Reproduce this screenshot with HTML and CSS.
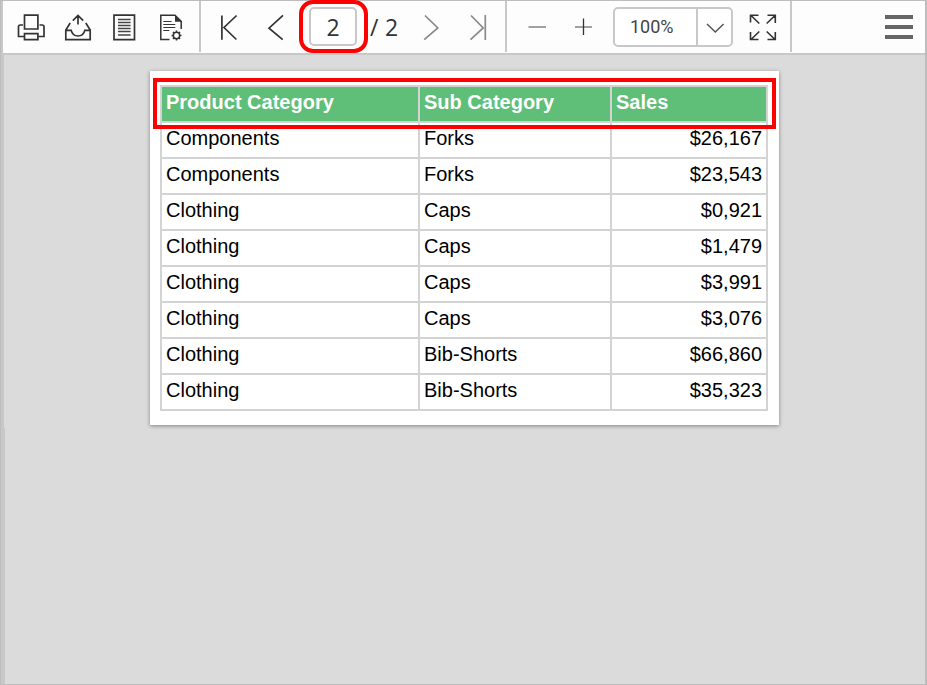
FILE: index.html
```html
<!DOCTYPE html>
<html lang="en">
<head>
<meta charset="utf-8">
<title>Report Viewer</title>
<link rel="stylesheet" href="styles.css">
</head>
<body>
<div class="viewer">
  <header class="toolbar">
    <div class="group file">
      <svg class="icon" viewBox="8 1 46 52"><path d="M24.500 25V15.200h13.400V25M24 36.500h-5.500V26.700q0-1.700 1.700-1.700h2.800M38.800 36.500h5.200V26.700q0-1.700-1.700-1.700h-2.800M24.500 25v4h13.400v-4M24.500 33.600h13.400v6H24.500z"/></svg>
      <svg class="icon" viewBox="54 1 46 52"><path d="M78 24.500V15.800M72.800 20.600l5.200-5.200 5.200 5.200M70.200 23l-4.400 7v9.600h24.400V30l-4.400-7M65.800 30.400h5.400q1.400 5.600 6.800 5.600t6.800-5.600h5.400"/></svg>
      <svg class="icon list" viewBox="100 1 46 52"><path d="M114 15.200h20.500v24.400H114z"/><path class="lines" d="M118 19.500h12.600M118 22.500h12.600M118 25.500h12.600M118 28.500h12.600M118 31.500h12.600M118 35h12.600"/></svg>
      <svg class="icon doc" viewBox="146 1 46 52"><path d="M169.500 39.600H160.800V15.200H175l6.200 6.200V29"/><path class="lines" d="M163.300 21.500h8.300M163.300 24.500h12M163.300 27.500h12M163.300 30.500h6"/><path class="solid" d="M175 15l6.700 6.700H175z"/><circle cx="176.500" cy="35.500" r="3.200"/><path d="M176.500 30.600v1.700M176.500 38.700v1.700M171.600 35.500h1.700M179.700 35.500h1.700M173 32l1.200 1.200M178.800 37.800l1.200 1.200M180 32l-1.200 1.200M174.200 37.800l-1.200 1.200"/></svg>
    </div>
    <div class="group paging">
      <svg class="icon" viewBox="201 1 46 52"><path d="M221.900 15.500V39.800M236.600 15.500L224 27.500l12.400 12"/></svg>
      <svg class="icon prev" viewBox="247 1 52 52"><path d="M283 15.300L269 28.200l13.700 11.500"/></svg>
      <div class="current"><span class="page-input">2</span></div>
      <span class="total">/ 2</span>
      <svg class="icon dim" viewBox="408 1 46 52"><path d="M425 15.500l12.800 12.400L424.200 39.700"/></svg>
      <svg class="icon dim" viewBox="454 1 46 52"><path d="M471 15.500l12.200 12.400L470.500 39.700M485.300 15v25"/></svg>
    </div>
    <div class="group zooming">
      <svg class="icon thin" viewBox="514 1 46 52"><path class="gray" d="M528.500 27h17.500"/></svg>
      <svg class="icon thin" viewBox="560 1 46 52"><path class="gray" d="M575 27h17"/><path d="M583.500 18.500v16.500"/></svg>
      <div class="zoom"><span class="zoom-value">100%</span><svg class="caret" viewBox="698 9 33 36"><path d="M707 24l8.300 8 8.300-8"/></svg></div>
      <svg class="icon full" viewBox="740 1 46 52"><path d="M750.500 22.500v-7.200h8M751 15.500l8.300 8M767.500 15.200h7.800v7.800M775 15.500l-8.300 8M750.500 32v7.500h8M751 39.500l8.300-8M767.500 39.500h7.800v-7.500M775 39.500l-8.300-8"/></svg>
    </div>
    <div class="menu"><i></i><i></i><i></i></div>
  </header>
  <main class="canvas">
    <section class="sheet">
      <table>
        <thead><tr><th class="category">Product Category</th><th class="sub">Sub Category</th><th class="sales">Sales</th></tr></thead>
        <tbody>
          <tr><td>Components</td><td>Forks</td><td>$26,167</td></tr>
          <tr><td>Components</td><td>Forks</td><td>$23,543</td></tr>
          <tr><td>Clothing</td><td>Caps</td><td>$0,921</td></tr>
          <tr><td>Clothing</td><td>Caps</td><td>$1,479</td></tr>
          <tr><td>Clothing</td><td>Caps</td><td>$3,991</td></tr>
          <tr><td>Clothing</td><td>Caps</td><td>$3,076</td></tr>
          <tr><td>Clothing</td><td>Bib-Shorts</td><td>$66,860</td></tr>
          <tr><td>Clothing</td><td>Bib-Shorts</td><td>$35,323</td></tr>
        </tbody>
      </table>
      <div class="highlight"></div>
    </section>
  </main>
</div>
</body>
</html>
```
FILE: styles.css
```css
* { box-sizing: border-box; }
body { margin: 0; overflow: hidden; }
.viewer {
  display: flex;
  flex-direction: column;
  height: 685px;
  border: 1px solid #bdbdbd;
  border-right-width: 2px;
  background: #c8c8c8;
  padding-left: 2px;
}
.toolbar {
  display: flex;
  flex: none;
  height: 54px;
  background: #fdfdfd;
  border-bottom: 2px solid #c8c8c8;
}
.group {
  display: flex;
  height: 51px;
  border-right: 2px solid #c8c8c8;
}
.file { width: 198px; padding-left: 5px; }
.paging { width: 306px; }
.zooming { width: 285px; padding-left: 7px; }
.icon {
  flex: none;
  width: 46px;
  height: 52px;
  fill: none;
  stroke: #333;
  stroke-width: 1.7;
}
.icon .solid { fill: #333; stroke: none; }
.list .lines { stroke-width: 1.5; stroke: #444; }
.doc .lines { stroke-width: 1.2; }
.doc { stroke-width: 1.5; }
.prev { width: 52px; }
.dim { stroke: #8a8a8a; }
.thin { stroke-width: 1.3; }
.thin .gray { stroke: #8a8a8a; stroke-width: 1.6; }
.full { margin-left: 7px; stroke-width: 1.6; }
.current {
  flex: none;
  display: flex;
  align-items: center;
  width: 69px;
  height: 53px;
  margin-top: -1px;
  border: 4px solid #f00;
  border-radius: 14px;
  padding-left: 6px;
}
.page-input {
  width: 48px;
  height: 39px;
  border: 2px solid #c8c8c8;
  border-radius: 5px;
  background: #fff;
  text-align: center;
}
.page-input, .total {
  font: 23px/37px "Open Sans", sans-serif;
  color: #333;
}
.total {
  flex: none;
  width: 40px;
  padding: 8px 0 0 2px;
  white-space: nowrap;
  letter-spacing: .3px;
}
.zoom {
  display: flex;
  width: 120px;
  height: 40px;
  margin: 6px 0 0 7px;
  border: 2px solid #c8c8c8;
  border-radius: 5px;
  background: #fff;
}
.zoom-value {
  width: 83px;
  border-right: 2px solid #c8c8c8;
  padding-left: 15px;
  font: 18px/35px Roboto, sans-serif;
  color: #444;
}
.caret { width: 33px; height: 36px; fill: none; stroke: #555; stroke-width: 1.5; }
.menu {
  display: flex;
  flex-direction: column;
  gap: 6px;
  margin: 14px 12px 0 auto;
}
.menu i { width: 28px; height: 4px; background: #666; }
.canvas {
  flex: 1;
  margin-left: 1px;
  padding: 16px 0 0 146px;
  background: linear-gradient(#c8c8c8, #c8c8c8) 0 373px / 1px 100% no-repeat #dbdbdb;
}
.sheet {
  position: relative;
  width: 629px;
  height: 354px;
  padding: 14px 10px;
  background: #fff;
  box-shadow: 0 1px 4px rgba(0, 0, 0, .4);
}
table {
  width: 608px;
  table-layout: fixed;
  border-collapse: collapse;
  font: 20px/24px "Liberation Sans", Arial, sans-serif;
  color: #000;
}
th, td {
  height: 36px;
  border: 2px solid #d3d3d3;
  padding: 3px 4px 7px;
  text-align: left;
}
th { background: #5fbe77; color: #fff; }
td:last-child { text-align: right; }
.category { width: 258px; }
.sub { width: 192px; }
.highlight {
  position: absolute;
  left: 3px;
  top: 7px;
  width: 623px;
  height: 51px;
  border: 4px solid #f00;
}
```
